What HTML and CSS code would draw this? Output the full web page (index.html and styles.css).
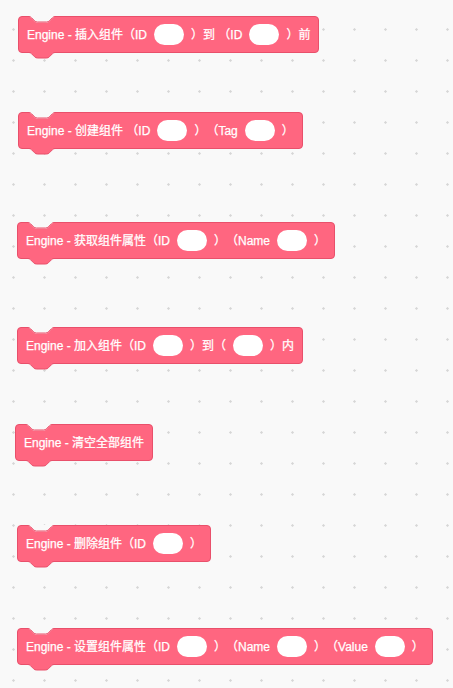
FILE: index.html
```html
<!DOCTYPE html>
<html lang="zh">
<head>
<meta charset="utf-8">
<title>Engine blocks</title>
<link rel="stylesheet" href="styles.css">
</head>
<body>
<div class="workspace">

  <div class="block b1">
    <svg class="notch" viewBox="0 0 26 8"><path class="cut" d="M0 0H26V1C25 1 24.5 1.2 23.6 2L20.4 5.2C19.6 6 18.8 6.5 17.5 6.5H8.5C7.2 6.5 6.4 6 5.6 5.2L2.4 2C1.5 1.2 1 1 0 1Z"/><path class="edge" d="M0 0.5C1 0.5 1.6 0.8 2.4 1.6L5.6 4.8C6.4 5.6 7.2 6 8.5 6H17.5C18.8 6 19.6 5.6 20.4 4.8L23.6 1.6C24.4 0.8 25 0.5 26 0.5"/></svg>
    <span class="t">Engine - 插入组件（ID</span><span class="slot"></span><span class="t">）到 （ID</span><span class="slot"></span><span class="t">）前</span>
    <svg class="tab" viewBox="0 0 26 8"><path class="fill" d="M0 0H26V0.5C25 0.5 24.4 0.8 23.6 1.6L20.4 4.8C19.6 5.6 18.8 6 17.5 6H8.5C7.2 6 6.4 5.6 5.6 4.8L2.4 1.6C1.6 0.8 1 0.5 0 0.5Z"/><path class="edge" d="M0 0.5C1 0.5 1.6 0.8 2.4 1.6L5.6 4.8C6.4 5.6 7.2 6 8.5 6H17.5C18.8 6 19.6 5.6 20.4 4.8L23.6 1.6C24.4 0.8 25 0.5 26 0.5"/></svg>
  </div>

  <div class="block b2">
    <svg class="notch" viewBox="0 0 26 8"><path class="cut" d="M0 0H26V1C25 1 24.5 1.2 23.6 2L20.4 5.2C19.6 6 18.8 6.5 17.5 6.5H8.5C7.2 6.5 6.4 6 5.6 5.2L2.4 2C1.5 1.2 1 1 0 1Z"/><path class="edge" d="M0 0.5C1 0.5 1.6 0.8 2.4 1.6L5.6 4.8C6.4 5.6 7.2 6 8.5 6H17.5C18.8 6 19.6 5.6 20.4 4.8L23.6 1.6C24.4 0.8 25 0.5 26 0.5"/></svg>
    <span class="t">Engine - 创建组件 （ID</span><span class="slot"></span><span class="t">）（Tag</span><span class="slot"></span><span class="t">）</span>
    <svg class="tab" viewBox="0 0 26 8"><path class="fill" d="M0 0H26V0.5C25 0.5 24.4 0.8 23.6 1.6L20.4 4.8C19.6 5.6 18.8 6 17.5 6H8.5C7.2 6 6.4 5.6 5.6 4.8L2.4 1.6C1.6 0.8 1 0.5 0 0.5Z"/><path class="edge" d="M0 0.5C1 0.5 1.6 0.8 2.4 1.6L5.6 4.8C6.4 5.6 7.2 6 8.5 6H17.5C18.8 6 19.6 5.6 20.4 4.8L23.6 1.6C24.4 0.8 25 0.5 26 0.5"/></svg>
  </div>

  <div class="block b3">
    <svg class="notch" viewBox="0 0 26 8"><path class="cut" d="M0 0H26V1C25 1 24.5 1.2 23.6 2L20.4 5.2C19.6 6 18.8 6.5 17.5 6.5H8.5C7.2 6.5 6.4 6 5.6 5.2L2.4 2C1.5 1.2 1 1 0 1Z"/><path class="edge" d="M0 0.5C1 0.5 1.6 0.8 2.4 1.6L5.6 4.8C6.4 5.6 7.2 6 8.5 6H17.5C18.8 6 19.6 5.6 20.4 4.8L23.6 1.6C24.4 0.8 25 0.5 26 0.5"/></svg>
    <span class="t">Engine - 获取组件属性（ID</span><span class="slot"></span><span class="t">）（Name</span><span class="slot"></span><span class="t">）</span>
    <svg class="tab" viewBox="0 0 26 8"><path class="fill" d="M0 0H26V0.5C25 0.5 24.4 0.8 23.6 1.6L20.4 4.8C19.6 5.6 18.8 6 17.5 6H8.5C7.2 6 6.4 5.6 5.6 4.8L2.4 1.6C1.6 0.8 1 0.5 0 0.5Z"/><path class="edge" d="M0 0.5C1 0.5 1.6 0.8 2.4 1.6L5.6 4.8C6.4 5.6 7.2 6 8.5 6H17.5C18.8 6 19.6 5.6 20.4 4.8L23.6 1.6C24.4 0.8 25 0.5 26 0.5"/></svg>
  </div>

  <div class="block b4">
    <svg class="notch" viewBox="0 0 26 8"><path class="cut" d="M0 0H26V1C25 1 24.5 1.2 23.6 2L20.4 5.2C19.6 6 18.8 6.5 17.5 6.5H8.5C7.2 6.5 6.4 6 5.6 5.2L2.4 2C1.5 1.2 1 1 0 1Z"/><path class="edge" d="M0 0.5C1 0.5 1.6 0.8 2.4 1.6L5.6 4.8C6.4 5.6 7.2 6 8.5 6H17.5C18.8 6 19.6 5.6 20.4 4.8L23.6 1.6C24.4 0.8 25 0.5 26 0.5"/></svg>
    <span class="t">Engine - 加入组件（ID</span><span class="slot"></span><span class="t">）到（</span><span class="slot"></span><span class="t">）内</span>
    <svg class="tab" viewBox="0 0 26 8"><path class="fill" d="M0 0H26V0.5C25 0.5 24.4 0.8 23.6 1.6L20.4 4.8C19.6 5.6 18.8 6 17.5 6H8.5C7.2 6 6.4 5.6 5.6 4.8L2.4 1.6C1.6 0.8 1 0.5 0 0.5Z"/><path class="edge" d="M0 0.5C1 0.5 1.6 0.8 2.4 1.6L5.6 4.8C6.4 5.6 7.2 6 8.5 6H17.5C18.8 6 19.6 5.6 20.4 4.8L23.6 1.6C24.4 0.8 25 0.5 26 0.5"/></svg>
  </div>

  <div class="block b5">
    <svg class="notch" viewBox="0 0 26 8"><path class="cut" d="M0 0H26V1C25 1 24.5 1.2 23.6 2L20.4 5.2C19.6 6 18.8 6.5 17.5 6.5H8.5C7.2 6.5 6.4 6 5.6 5.2L2.4 2C1.5 1.2 1 1 0 1Z"/><path class="edge" d="M0 0.5C1 0.5 1.6 0.8 2.4 1.6L5.6 4.8C6.4 5.6 7.2 6 8.5 6H17.5C18.8 6 19.6 5.6 20.4 4.8L23.6 1.6C24.4 0.8 25 0.5 26 0.5"/></svg>
    <span class="t">Engine - 清空全部组件</span>
    <svg class="tab" viewBox="0 0 26 8"><path class="fill" d="M0 0H26V0.5C25 0.5 24.4 0.8 23.6 1.6L20.4 4.8C19.6 5.6 18.8 6 17.5 6H8.5C7.2 6 6.4 5.6 5.6 4.8L2.4 1.6C1.6 0.8 1 0.5 0 0.5Z"/><path class="edge" d="M0 0.5C1 0.5 1.6 0.8 2.4 1.6L5.6 4.8C6.4 5.6 7.2 6 8.5 6H17.5C18.8 6 19.6 5.6 20.4 4.8L23.6 1.6C24.4 0.8 25 0.5 26 0.5"/></svg>
  </div>

  <div class="block b6">
    <svg class="notch" viewBox="0 0 26 8"><path class="cut" d="M0 0H26V1C25 1 24.5 1.2 23.6 2L20.4 5.2C19.6 6 18.8 6.5 17.5 6.5H8.5C7.2 6.5 6.4 6 5.6 5.2L2.4 2C1.5 1.2 1 1 0 1Z"/><path class="edge" d="M0 0.5C1 0.5 1.6 0.8 2.4 1.6L5.6 4.8C6.4 5.6 7.2 6 8.5 6H17.5C18.8 6 19.6 5.6 20.4 4.8L23.6 1.6C24.4 0.8 25 0.5 26 0.5"/></svg>
    <span class="t">Engine - 删除组件（ID</span><span class="slot"></span><span class="t">）</span>
    <svg class="tab" viewBox="0 0 26 8"><path class="fill" d="M0 0H26V0.5C25 0.5 24.4 0.8 23.6 1.6L20.4 4.8C19.6 5.6 18.8 6 17.5 6H8.5C7.2 6 6.4 5.6 5.6 4.8L2.4 1.6C1.6 0.8 1 0.5 0 0.5Z"/><path class="edge" d="M0 0.5C1 0.5 1.6 0.8 2.4 1.6L5.6 4.8C6.4 5.6 7.2 6 8.5 6H17.5C18.8 6 19.6 5.6 20.4 4.8L23.6 1.6C24.4 0.8 25 0.5 26 0.5"/></svg>
  </div>

  <div class="block b7">
    <svg class="notch" viewBox="0 0 26 8"><path class="cut" d="M0 0H26V1C25 1 24.5 1.2 23.6 2L20.4 5.2C19.6 6 18.8 6.5 17.5 6.5H8.5C7.2 6.5 6.4 6 5.6 5.2L2.4 2C1.5 1.2 1 1 0 1Z"/><path class="edge" d="M0 0.5C1 0.5 1.6 0.8 2.4 1.6L5.6 4.8C6.4 5.6 7.2 6 8.5 6H17.5C18.8 6 19.6 5.6 20.4 4.8L23.6 1.6C24.4 0.8 25 0.5 26 0.5"/></svg>
    <span class="t">Engine - 设置组件属性（ID</span><span class="slot"></span><span class="t">）（Name</span><span class="slot"></span><span class="t">）（Value</span><span class="slot"></span><span class="t">）</span>
    <svg class="tab" viewBox="0 0 26 8"><path class="fill" d="M0 0H26V0.5C25 0.5 24.4 0.8 23.6 1.6L20.4 4.8C19.6 5.6 18.8 6 17.5 6H8.5C7.2 6 6.4 5.6 5.6 4.8L2.4 1.6C1.6 0.8 1 0.5 0 0.5Z"/><path class="edge" d="M0 0.5C1 0.5 1.6 0.8 2.4 1.6L5.6 4.8C6.4 5.6 7.2 6 8.5 6H17.5C18.8 6 19.6 5.6 20.4 4.8L23.6 1.6C24.4 0.8 25 0.5 26 0.5"/></svg>
  </div>

</div>
</body>
</html>
```

FILE: styles.css
```css
html, body {
  margin: 0;
  padding: 0;
  height: 100%;
}

body {
  background-color: #f9f9f9;
  background-image: radial-gradient(circle, #d6d6d6 0, #d6d6d6 0.9px, rgba(214,214,214,0) 1.5px);
  background-size: 31px 31px;
  background-position: -2px 14px;
  overflow: hidden;
}

.workspace {
  position: relative;
  width: 453px;
  height: 688px;
}

.block {
  position: absolute;
  box-sizing: border-box;
  height: 37px;
  display: flex;
  align-items: center;
  gap: 7px;
  padding: 0 8px;
  background: #ff6680;
  border: 1px solid #e9506b;
  border-radius: 4px;
  color: #ffffff;
  font-family: "Liberation Sans", "Noto Sans CJK SC", sans-serif;
  font-size: 12px;
  white-space: pre;
  text-spacing-trim: space-all;
  -webkit-text-stroke: 0.25px #ffffff;
}

.b1 { left: 18px; top: 16px; }
.b2 { left: 18px; top: 112px; }
.b3 { left: 17px; top: 222px; }
.b4 { left: 17px; top: 327px; }
.b5 { left: 15px; top: 424px; }
.b6 { left: 17px; top: 525px; }
.b7 { left: 17px; top: 628px; }

.t {
  line-height: 14px;
}

.slot {
  display: block;
  width: 30px;
  height: 21px;
  border-radius: 11px;
  background: #ffffff;
}

.notch {
  position: absolute;
  left: 10px;
  top: -1px;
  width: 26px;
  height: 8px;
  overflow: visible;
}

.notch .cut {
  fill: #f9f9f9;
}

.tab {
  position: absolute;
  left: 10px;
  top: 100%;
  width: 26px;
  height: 8px;
  overflow: visible;
}

.tab .fill {
  fill: #ff6680;
}

.edge {
  fill: none;
  stroke: #e9506b;
  stroke-width: 1;
}
```
